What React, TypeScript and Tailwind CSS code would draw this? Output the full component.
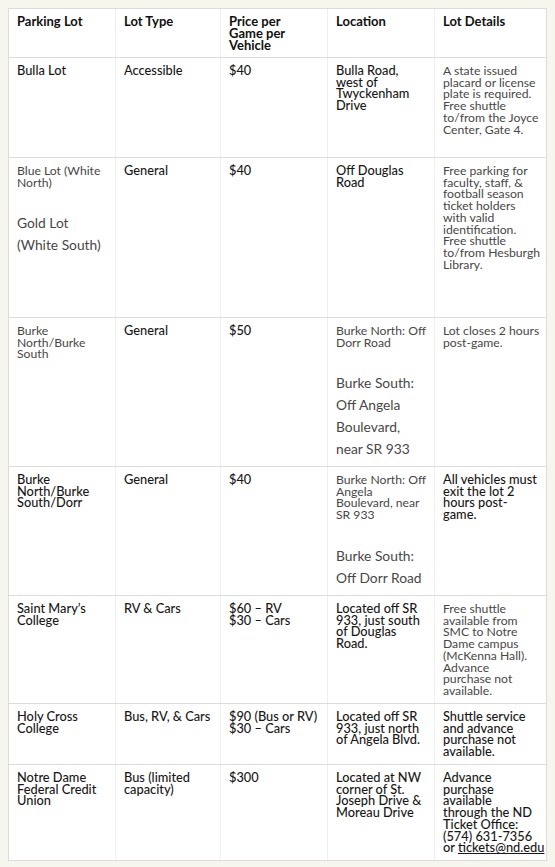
import React from "react";

type Seg = { t: "b" | "l" | "L"; c: React.ReactNode };
type Cell = Seg[];

const H = (c: React.ReactNode): Seg => ({ t: "b", c });
const Lt = (c: React.ReactNode): Seg => ({ t: "l", c });
const Lg = (c: React.ReactNode): Seg => ({ t: "L", c });

const rows: { h: string; cells: Cell[] }[] = [
  {
    h: "h-[100px]",
    cells: [
      [H("Bulla Lot")],
      [H("Accessible")],
      [H("$40")],
      [H("Bulla Road,\nwest of\nTwyckenham\nDrive")],
      [Lt("A state issued\nplacard or license\nplate is required.\nFree shuttle\nto/from the Joyce\nCenter, Gate 4.")],
    ],
  },
  {
    h: "h-[160px]",
    cells: [
      [Lt("Blue Lot (White\nNorth)"), Lg("Gold Lot\n(White South)")],
      [H("General")],
      [H("$40")],
      [H("Off Douglas\nRoad")],
      [
        Lt(
          "Free parking for\nfaculty, staff, &\nfootball season\nticket holders\nwith valid\nidentification.\nFree shuttle\nto/from Hesburgh\nLibrary."
        ),
      ],
    ],
  },
  {
    h: "h-[149px]",
    cells: [
      [Lt("Burke\nNorth/Burke\nSouth")],
      [H("General")],
      [H("$50")],
      [Lt("Burke North: Off\nDorr Road"), Lg("Burke South:\nOff Angela\nBoulevard,\nnear SR 933")],
      [Lt("Lot closes 2 hours\npost-game.")],
    ],
  },
  {
    h: "h-[129px]",
    cells: [
      [H("Burke\nNorth/Burke\nSouth/Dorr")],
      [H("General")],
      [H("$40")],
      [Lt("Burke North: Off\nAngela\nBoulevard, near\nSR 933"), Lg("Burke South:\nOff Dorr Road")],
      [H("All vehicles must\nexit the lot 2\nhours post-\ngame.")],
    ],
  },
  {
    h: "h-[108px]",
    cells: [
      [H("Saint Mary’s\nCollege")],
      [H("RV & Cars")],
      [H("$60 – RV\n$30 – Cars")],
      [H("Located off SR\n933, just south\nof Douglas\nRoad.")],
      [
        Lt(
          "Free shuttle\navailable from\nSMC to Notre\nDame campus\n(McKenna Hall).\nAdvance\npurchase not\navailable."
        ),
      ],
    ],
  },
  {
    h: "h-[61px]",
    cells: [
      [H("Holy Cross\nCollege")],
      [H("Bus, RV, & Cars")],
      [H("$90 (Bus or RV)\n$30 – Cars")],
      [H("Located off SR\n933, just north\nof Angela Blvd.")],
      [H("Shuttle service\nand advance\npurchase not\navailable.")],
    ],
  },
  {
    h: "h-[96px]",
    cells: [
      [H("Notre Dame\nFederal Credit\nUnion")],
      [H("Bus (limited\ncapacity)")],
      [H("$300")],
      [H("Located at NW\ncorner of St.\nJoseph Drive &\nMoreau Drive")],
      [
        H(
          <>
            {"Advance\npurchase\navailable\nthrough the ND\nTicket Office:\n(574) 631-7356\nor "}
            <a href="#" className="inline-block leading-[11.7px] underline">
              tickets@nd.edu
            </a>
          </>
        ),
      ],
    ],
  },
];

const cols = "grid grid-cols-[106px_105px_107px_107px_112px]";

function renderSeg(s: Seg, i: number) {
  if (s.t === "b")
    return (
      <div
        key={i}
        className="whitespace-pre text-[12.8px] leading-[11.7px] font-medium text-[#181818]"
      >
        {s.c}
      </div>
    );
  if (s.t === "l")
    return (
      <div
        key={i}
        className="whitespace-pre text-[12.2px] leading-[11.7px] font-normal text-[#474747]"
      >
        {s.c}
      </div>
    );
  return (
    <div
      key={i}
      className="mt-6 whitespace-pre text-[13.8px] leading-[21.7px] font-normal text-[#474747]"
    >
      {s.c}
    </div>
  );
}

export default function App() {
  const headers = ["Parking Lot", "Lot Type", "Price per\nGame per\nVehicle", "Location", "Lot Details"];
  return (
    <div
      className="min-h-screen bg-[#f7f6ee] p-2"
      style={{ fontFamily: "Lato, 'Noto Sans', sans-serif" }}
    >
      <div className="w-[539px] border border-[#dcdcdc] bg-white">
        <div className={`${cols} h-[48px]`}>
          {headers.map((h, i) => (
            <div
              key={h}
              className={`whitespace-pre px-2 pt-[6px] text-[13px] leading-[12.2px] font-bold text-[#111] ${
                i > 0 ? "border-l border-[#f0f0f0]" : ""
              }`}
            >
              {h}
            </div>
          ))}
        </div>
        {rows.map((r, ri) => (
          <div key={ri} className={`${cols} ${r.h} border-t border-[#dcdcdc]`}>
            {r.cells.map((cell, ci) => (
              <div
                key={ci}
                className={`px-2 pt-[7px] ${ci > 0 ? "border-l border-[#f0f0f0]" : ""}`}
              >
                {cell.map(renderSeg)}
              </div>
            ))}
          </div>
        ))}
      </div>
    </div>
  );
}
